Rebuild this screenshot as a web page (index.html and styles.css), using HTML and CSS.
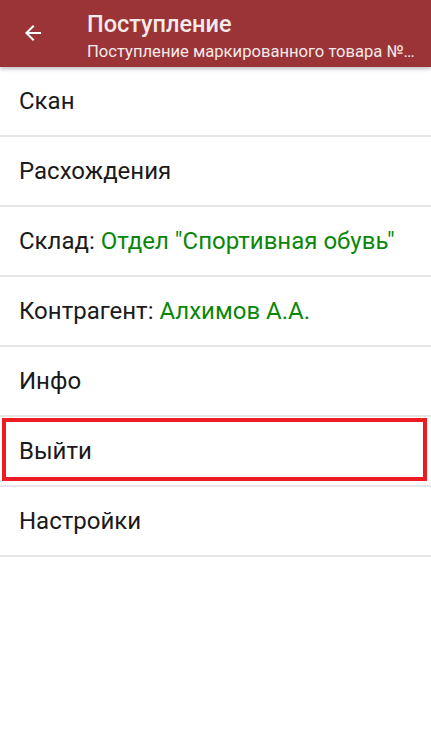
FILE: index.html
```html
<!DOCTYPE html>
<html lang="ru">
<head>
  <meta charset="UTF-8">
  <meta name="viewport" content="width=device-width, initial-scale=1.0">
  <title>Поступление</title>
  <link rel="stylesheet" href="styles.css">
</head>
<body>
  <!-- Toolbar -->
  <header class="toolbar">
    <button class="back-btn" aria-label="Назад">
      <svg width="24" height="24" viewBox="0 0 24 24">
        <path d="M20 11H7.83l5.59-5.59L12 4l-8 8 8 8 1.41-1.41L7.83 13H20v-2z" fill="#fff"/>
      </svg>
    </button>
    <div class="toolbar-titles">
      <div class="toolbar-title">Поступление</div>
      <div class="toolbar-subtitle">Поступление маркированного товара №1234567</div>
    </div>
  </header>

  <!-- Menu -->
  <ul class="menu">
    <li class="menu-item">Скан</li>
    <li class="menu-item">Расхождения</li>
    <li class="menu-item">Склад: <span class="value">Отдел "Спортивная обувь"</span></li>
    <li class="menu-item">Контрагент: <span class="value">Алхимов А.А.</span></li>
    <li class="menu-item">Инфо</li>
    <li class="menu-item highlighted">Выйти</li>
    <li class="menu-item">Настройки</li>
  </ul>
</body>
</html>
```

FILE: styles.css
```css
* {
  margin: 0;
  padding: 0;
  box-sizing: border-box;
}

body {
  font-family: Roboto, "Noto Sans", sans-serif;
  background-color: #fff;
  color: #1a1a1a;
  width: 431px;
  height: 740px;
  overflow: hidden;
}

.toolbar {
  height: 67px;
  background-color: #9a3437;
  display: flex;
  align-items: center;
  box-shadow: 0 2px 4px rgba(0, 0, 0, 0.25);
  position: relative;
  z-index: 1;
}

.back-btn {
  width: 66px;
  height: 67px;
  display: flex;
  align-items: center;
  justify-content: center;
  background: none;
  border: none;
  padding-bottom: 1px;
}

.toolbar-titles {
  margin-left: 21px;
  min-width: 0;
  flex: 1;
  padding-right: 14px;
  padding-top: 4px;
}

.toolbar-title {
  color: #f5eaea;
  font-size: 23.5px;
  font-weight: 500;
  line-height: 28px;
}

.toolbar-subtitle {
  color: #f5eaea;
  font-size: 16.6px;
  line-height: 20px;
  margin-top: 4px;
  white-space: nowrap;
  overflow: hidden;
  text-overflow: ellipsis;
}

.menu {
  list-style-type: none;
}

.menu-item {
  height: 70px;
  padding-left: 19px;
  display: flex;
  align-items: center;
  font-size: 24px;
  border-bottom: 2px solid #e6e6e6;
  white-space: pre;
  position: relative;
}

.menu-item .value {
  color: #0a870a;
}

/* Red highlight frame */
.menu-item.highlighted::after {
  content: "";
  position: absolute;
  top: 1px;
  left: 2px;
  right: 4px;
  bottom: 4px;
  border: 4px solid #ed1c24;
}
```
